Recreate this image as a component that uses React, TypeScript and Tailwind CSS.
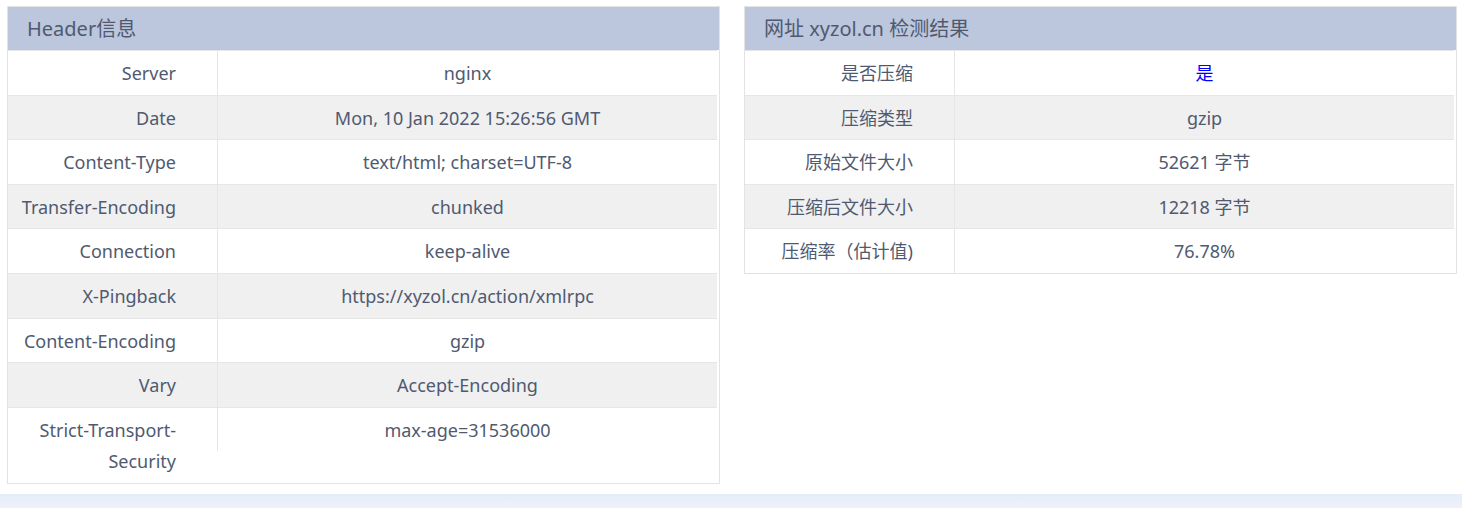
import React from 'react';

type Row = { key: string; value: string; valueClass?: string };

const headerRows: Row[] = [
  { key: 'Server', value: 'nginx' },
  { key: 'Date', value: 'Mon, 10 Jan 2022 15:26:56 GMT' },
  { key: 'Content-Type', value: 'text/html; charset=UTF-8' },
  { key: 'Transfer-Encoding', value: 'chunked' },
  { key: 'Connection', value: 'keep-alive' },
  { key: 'X-Pingback', value: 'https://xyzol.cn/action/xmlrpc' },
  { key: 'Content-Encoding', value: 'gzip' },
  { key: 'Vary', value: 'Accept-Encoding' },
  { key: 'Strict-Transport-Security', value: 'max-age=31536000' },
];

const gzipRows: Row[] = [
  { key: '是否压缩', value: '是', valueClass: 'text-[#0000ff]' },
  { key: '压缩类型', value: 'gzip' },
  { key: '原始文件大小', value: '52621 字节' },
  { key: '压缩后文件大小', value: '12218 字节' },
  { key: '压缩率（估计值)', value: '76.78%' },
];

const font = "font-['Noto_Sans','Noto_Sans_CJK_SC',sans-serif]";

const Panel = ({
  title,
  rows,
  className = '',
}: {
  title: string;
  rows: Row[];
  className?: string;
}) => (
  <div className={`w-[713px] border border-[#e3e3e3] bg-white ${className}`}>
    <div className="h-[43px] bg-[#bcc6dd] pl-[19px] flex items-center text-[20px] text-[#4f5a70]">
      {title}
    </div>
    <div className="pr-[2px]">
      {rows.map((row, index) => (
        <div
          key={index}
          className={`flex h-[44.6px] border-t border-[#e6e6e6] ${
            index % 2 === 1 ? 'bg-[#f0f0f0]' : 'bg-white'
          }`}
        >
          <div className="w-[210px] shrink-0 border-r border-[#e6e6e6] pr-[41px] pl-[8px] text-right leading-[31px] pt-[7px]">
            {row.key}
          </div>
          <div
            className={`flex-1 text-center leading-[31px] pt-[7px] ${
              row.valueClass ?? ''
            }`}
          >
            {row.value}
          </div>
        </div>
      ))}
    </div>
  </div>
);

export default function App() {
  return (
    <div className={`${font} text-[18px] text-[#4f5a70] bg-white`}>
      <div className="flex items-start gap-[24px] pl-[7px] pt-[6px]">
        <Panel title="Header信息" rows={headerRows} className="pb-[32px]" />
        <Panel title="网址 xyzol.cn 检测结果" rows={gzipRows} />
      </div>
      <div className="mt-[10px] h-[14px] bg-gradient-to-b from-[#e6edf8] to-[#eef2f8]" />
    </div>
  );
}
